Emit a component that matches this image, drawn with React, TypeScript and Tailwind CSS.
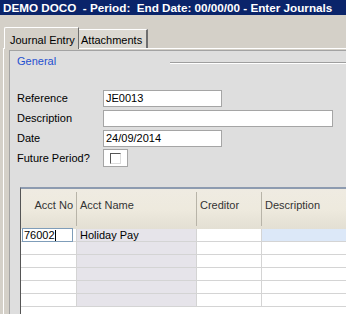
import React from 'react';

const font = { fontFamily: '"Liberation Sans", Arial, sans-serif' };

function Field({ label, width, value }: { label: string; width: string; value?: string }) {
  return (
    <div className="flex items-center h-[17px]">
      <div className="w-[86px] text-[11px] text-black leading-none">{label}</div>
      <div className={`${width} h-[17px] bg-white border border-[#a5a5a5] flex items-center pl-[2px] text-[11px] text-black`}>
        {value}
      </div>
    </div>
  );
}

const rows = [0, 1, 2, 3, 4, 5];

export default function App() {
  return (
    <div className="w-[346px] h-[314px] overflow-hidden bg-[#d4d0c8] flex flex-col" style={font}>
      {/* title bar */}
      <div className="h-[15px] shrink-0 bg-[#0a246a] text-white font-bold text-[11.7px] leading-[15px] pl-[3px] whitespace-pre">
        DEMO DOCO  - Period:  End Date: 00/00/00 - Enter Journals
      </div>

      {/* tabs */}
      <div className="h-[33px] shrink-0 flex items-end pl-[4px]">
        <div className="relative z-10 w-[75px] h-[22px] -mb-[1px] bg-[#d4d0c8] border-t border-l border-white border-r border-r-[#6e6e6e] rounded-tl-[2px] flex items-start pt-[4px] pl-[5px] text-[11px] text-black">
          Journal Entry
        </div>
        <div className="w-[69px] h-[19px] bg-[#dcd9d2] border-t border-white border-r-2 border-r-[#6e6e6e] flex items-start pt-[2px] pl-[2px] text-[11px] text-black">
          Attachments
        </div>
      </div>

      {/* tab page */}
      <div className="flex-1 ml-[3px] border-t border-l border-white pt-[1px] pl-[5px]">
        <div className="h-full border-t border-l border-[#a3a3a3] bg-[#dedede] flex flex-col">
          <div className="h-[20px] flex items-center pl-[7px]">
            <span className="text-[11px] text-[#1f4fd0] w-[153px]">General</span>
            <div className="flex-1 h-[2px] border-t border-[#9e9e9e] border-b border-b-white mt-[3px]" />
          </div>

          <div className="pl-[7px] pt-[19px] flex flex-col gap-[3px]">
            <Field label="Reference" width="w-[119px]" value="JE0013" />
            <Field label="Description" width="w-[230px]" />
            <Field label="Date" width="w-[119px]" value="24/09/2014" />
            <div className="flex items-center h-[18px] -mt-[1px]">
              <div className="w-[86px] text-[11px] text-black">Future Period?</div>
              <div className="w-[25px] h-[18px] bg-white border border-[#a5a5a5] flex items-center pl-[6px]">
                <div className="w-[11px] h-[11px] bg-white border border-t-[#555] border-l-[#555] border-r-[#dcdcdc] border-b-[#dcdcdc]" />
              </div>
            </div>
          </div>

          {/* grid */}
          <div className="pl-[10px] pt-[20px] flex-1">
            <div className="h-full border-t-2 border-t-[#8d9bb0] border-l border-l-[#555] bg-white">
              <div className="h-[40px] flex bg-gradient-to-b from-[#efebe2] via-[#eeeade] to-[#e3dfd3] text-[11px] text-[#333]">
                <div className="w-[56px] flex items-center justify-end pr-[3px] pb-[7px] border-r border-r-[#b8b4a8] my-[3px]">Acct No</div>
                <div className="w-[120px] flex items-center pl-[3px] pb-[7px] border-r border-r-[#b8b4a8] my-[3px]">Acct Name</div>
                <div className="w-[65px] flex items-center pl-[3px] pb-[7px] border-r border-r-[#b8b4a8] my-[3px]">Creditor</div>
                <div className="flex-1 flex items-center pl-[3px] pb-[7px] my-[3px]">Description</div>
              </div>
              {rows.map((r) => (
                <div key={r} className="h-[13px] flex border-b border-[#d4d4d4] text-[11px] text-black">
                  <div className="w-[56px] border-r border-[#d4d4d4] bg-white flex">
                    {r === 0 && (
                      <div className="w-[51px] h-[14px] -mt-[1px] ml-[1px] border border-[#7f9db9] bg-white flex items-center pl-[1px] leading-none">
                        76002<span className="w-[1px] h-[11px] bg-black" />
                      </div>
                    )}
                  </div>
                  <div className="w-[120px] border-r border-[#d4d4d4] bg-[#e6e4ea] flex items-center pl-[3px] leading-none">
                    {r === 0 ? 'Holiday Pay' : ''}
                  </div>
                  <div className="w-[65px] border-r border-[#d4d4d4] bg-white" />
                  <div className={`flex-1 ${r === 0 ? 'bg-[#dce8f8]' : 'bg-white'}`} />
                </div>
              ))}
            </div>
          </div>
        </div>
      </div>
    </div>
  );
}
